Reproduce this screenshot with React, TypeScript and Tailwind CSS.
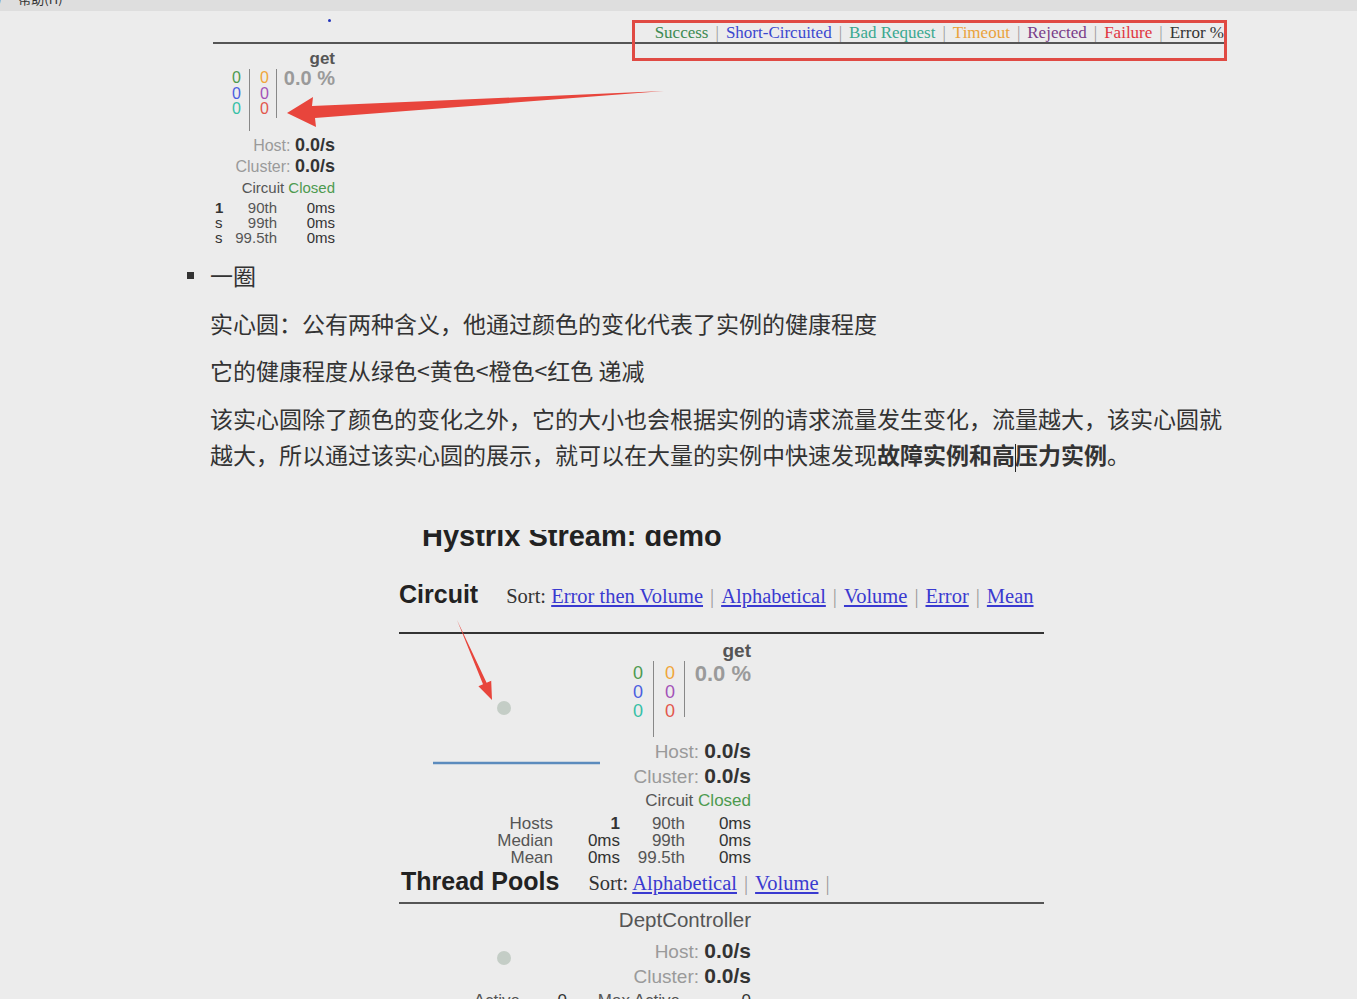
import React from 'react';

const sans = "font-['Liberation_Sans',Arial,sans-serif]";
const serif = "font-['Liberation_Serif','Times_New_Roman',serif]";
const cjk = "font-['Noto_Sans_CJK_SC','Noto_Sans',sans-serif]";

const Sep = () => <span className="mx-[7px] text-[#999]">|</span>;

const Legend = () => (
  <div className={`${serif} pr-[2px] text-[17px] leading-[18px]`}>
    <span className="text-[#3c8a52]">Success</span>
    <Sep />
    <span className="text-[#3b47cf]">Short-Circuited</span>
    <Sep />
    <span className="text-[#3aa890]">Bad Request</span>
    <Sep />
    <span className="text-[#eaa23c]">Timeout</span>
    <Sep />
    <span className="text-[#7a3c88]">Rejected</span>
    <Sep />
    <span className="text-[#e0363f]">Failure</span>
    <Sep />
    <span className="text-[#333]">Error %</span>
  </div>
);

const Counts = ({ big }: { big?: boolean }) => {
  const col = big ? 'w-[10px] text-[18px] leading-[19px] pt-[3px]' : 'w-[9px] text-[16px] leading-[15.5px] pt-[1px]';
  return (
    <div className={`flex self-stretch ${big ? 'h-[76px] pl-[1px]' : 'h-[62px] pl-[19px]'}`}>
      <div className={`flex flex-col text-center ${col}`}>
        <span className="text-[#4d9a4f]">0</span>
        <span className="text-[#4b5ee0]">0</span>
        <span className="text-[#36c0a6]">0</span>
      </div>
      <div className={`w-px bg-[#888] ${big ? 'ml-[10px] h-[76px]' : 'ml-[8px] h-[62px]'}`} />
      <div className={`flex flex-col text-center ${col} ${big ? 'ml-[11px]' : 'ml-[10px]'}`}>
        <span className="text-[#f0a63a]">0</span>
        <span className="text-[#a352b8]">0</span>
        <span className="text-[#e2574c]">0</span>
      </div>
      <div className={`w-px bg-[#888] ${big ? 'ml-[9px] h-[56px]' : 'ml-[7px] h-[49px]'}`} />
      <div
        className={`flex-1 text-right font-bold text-[#9a9a9a] ${big ? 'pt-[2px] text-[22px] leading-[22px]' : 'text-[20px] leading-[18px]'}`}
      >
        0.0 %
      </div>
    </div>
  );
};

const Rate = ({ label, big }: { label: string; big?: boolean }) => (
  <div className={`flex items-baseline justify-end whitespace-nowrap ${big ? 'h-[25px] leading-[25px]' : 'h-[21px] leading-[21px]'}`}>
    <span className={`text-[#9a9a9a] ${big ? 'text-[19px]' : 'text-[16px]'}`}>{label}:&nbsp;</span>
    <span className={`font-bold text-[#333] ${big ? 'text-[21px]' : 'text-[18px]'}`}>0.0/s</span>
  </div>
);

const SortLinks = ({ items, trailing }: { items: string[]; trailing?: boolean }) => (
  <div className={`${serif} whitespace-nowrap text-[20.5px] text-[#333]`}>
    Sort:{' '}
    {items.map((it, i) => (
      <React.Fragment key={it}>
        {i > 0 && <Sep />}
        <span className="text-[#3a3ad0] underline underline-offset-2">{it}</span>
      </React.Fragment>
    ))}
    {trailing && <Sep />}
  </div>
);

export default function App() {
  return (
    <div className={`relative h-[999px] w-[1357px] overflow-hidden bg-[#ececec] ${sans}`}>
      {/* window menu bar */}
      <div className="h-[11px] overflow-hidden bg-[#dedede]">
        <div className={`${cjk} -ml-[3px] -mt-[9px] text-[13px] leading-[16px] text-[#333]`}>
          ) <span className="ml-[14px]">帮助(H)</span>
        </div>
      </div>

      {/* first dashboard capture */}
      <div className="ml-[213px] w-[1013px]">
        <div className="flex h-[33px] items-end justify-between border-b-2 border-[#555]">
          <span className="mb-[20px] ml-[115px] h-[3px] w-[3px] rounded-full bg-[#2233bb]" />
          <Legend />
        </div>
        <div className="flex w-[122px] flex-col items-end text-right">
          <div className="mt-[6px] text-[17px] font-bold leading-[18px] text-[#555]">get</div>
          <div className="mt-[1px] self-stretch">
            <Counts />
          </div>
          <div className="mt-[4px]">
            <Rate label="Host" />
          </div>
          <Rate label="Cluster" />
          <div className="text-[15px] leading-[22px] text-[#555]">
            Circuit <span className="text-[#4d9a4f]">Closed</span>
          </div>
          <div className="mt-[1px] grid w-full grid-cols-[20px_44px_58px] text-[15px] leading-[15px] text-[#555]">
            <span className="pl-[2px] text-left font-bold text-[#333]">1</span>
            <span>90th</span>
            <span className="text-[#333]">0ms</span>
            <span className="pl-[2px] text-left text-[#333]">s</span>
            <span>99th</span>
            <span className="text-[#333]">0ms</span>
            <span className="pl-[2px] text-left text-[#333]">s</span>
            <span>99.5th</span>
            <span className="text-[#333]">0ms</span>
          </div>
        </div>
      </div>

      {/* notes */}
      <div className={`${cjk} ml-[210px] mt-[12px] w-[1016px] text-[23px] leading-[36px] text-[#333]`}>
        <div className="flex items-center">
          <span className="-ml-[23px] mr-[16px] h-[7px] w-[7px] bg-[#333]" />
          <span>一圈</span>
        </div>
        <p className="mt-[12px]">实心圆：公有两种含义，他通过颜色的变化代表了实例的健康程度</p>
        <p className="mt-[11px]">它的健康程度从绿色&lt;黄色&lt;橙色&lt;红色 递减</p>
        <p className="mt-[12px]">
          该实心圆除了颜色的变化之外，它的大小也会根据实例的请求流量发生变化，流量越大，该实心圆就越大，所以通过该实心圆的展示，就可以在大量的实例中快速发现
          <b>
            故障实例和高
            <span className="-mr-px inline-block h-[28px] w-px bg-[#222] align-middle" />
            压力实例
          </b>
          。
        </p>
      </div>

      {/* second dashboard capture */}
      <div className="ml-[399px] mt-[58px] w-[645px] overflow-hidden">
        <div className="-mt-[10px] whitespace-nowrap pl-[23px] text-[29px] font-bold leading-[32px] text-[#222]">
          Hystrix Stream: demo
        </div>

        <div className="mt-[28px] flex h-[30px] items-center">
          <span className="text-[25px] font-bold text-[#222]">Circuit</span>
          <div className="ml-[28px] mt-[2px]">
            <SortLinks items={['Error then Volume', 'Alphabetical', 'Volume', 'Error', 'Mean']} />
          </div>
        </div>
        <div className="mt-[22px] h-[2px] bg-[#333]" />

        <div className="w-[352px]">
          <div className="flex">
            <svg width="233" height="180" className="shrink-0">
              <circle cx="105" cy="74" r="7" fill="#c4cdc6" />
              <line x1="34" y1="129" x2="201" y2="129" stroke="#5b8bbd" strokeWidth="2.5" />
            </svg>
            <div className="flex w-[119px] flex-col items-end text-right">
              <div className="pt-[7px] text-[19px] font-bold leading-[20px] text-[#555]">get</div>
              <Counts big />
              <div className="mt-[1px] self-stretch">
                <Rate label="Host" big />
              </div>
              <div className="self-stretch">
                <Rate label="Cluster" big />
              </div>
              <div className="whitespace-nowrap text-[17px] leading-[25px] text-[#555]">
                Circuit <span className="text-[#4d9a4f]">Closed</span>
              </div>
            </div>
          </div>
          <div className="mt-[1px] grid grid-cols-[154px_67px_65px_66px] text-right text-[17px] leading-[17px] text-[#555]">
            <span>Hosts</span>
            <span className="font-bold text-[#333]">1</span>
            <span>90th</span>
            <span className="text-[#333]">0ms</span>
            <span>Median</span>
            <span className="text-[#333]">0ms</span>
            <span>99th</span>
            <span className="text-[#333]">0ms</span>
            <span>Mean</span>
            <span className="text-[#333]">0ms</span>
            <span>99.5th</span>
            <span className="text-[#333]">0ms</span>
          </div>
        </div>

        <div className="mt-[1px] flex h-[30px] items-center pl-[2px]">
          <span className="text-[25px] font-bold text-[#222]">Thread Pools</span>
          <div className="ml-[29px] mt-[2px]">
            <SortLinks items={['Alphabetical', 'Volume']} trailing />
          </div>
        </div>
        <div className="mt-[5px] h-[2px] bg-[#555]" />

        <div className="w-[352px]">
          <div className="flex">
            <svg width="233" height="88" className="shrink-0">
              <circle cx="105" cy="54" r="7" fill="#c4cdc6" />
            </svg>
            <div className="flex w-[119px] flex-col items-end text-right">
              <div className="whitespace-nowrap pt-[5px] text-[20.5px] leading-[22px] text-[#555]">DeptController</div>
              <div className="mt-[7px] self-stretch">
                <Rate label="Host" big />
              </div>
              <div className="self-stretch">
                <Rate label="Cluster" big />
              </div>
            </div>
          </div>
          <div className="grid grid-cols-[121px_47px_113px_71px] text-right text-[17px] leading-[17px] text-[#555]">
            <span>Active</span>
            <span className="text-[#333]">0</span>
            <span>Max Active</span>
            <span className="text-[#333]">0</span>
          </div>
        </div>
      </div>

      {/* annotations drawn over the captures */}
      <div className="pointer-events-none absolute left-[632px] top-[20px] h-[41px] w-[595px] border-[3px] border-[#e04a43]" />
      <svg className="pointer-events-none absolute left-0 top-0" width="1357" height="999">
        <polygon points="287,113 313,97 312,106 664,91 315,118 316,127" fill="#e8453c" />
        <polygon points="457,620 486.6,682.7 491.2,680.7 492,700 478.4,686.3 483,684.3" fill="#e8453c" />
      </svg>
    </div>
  );
}
